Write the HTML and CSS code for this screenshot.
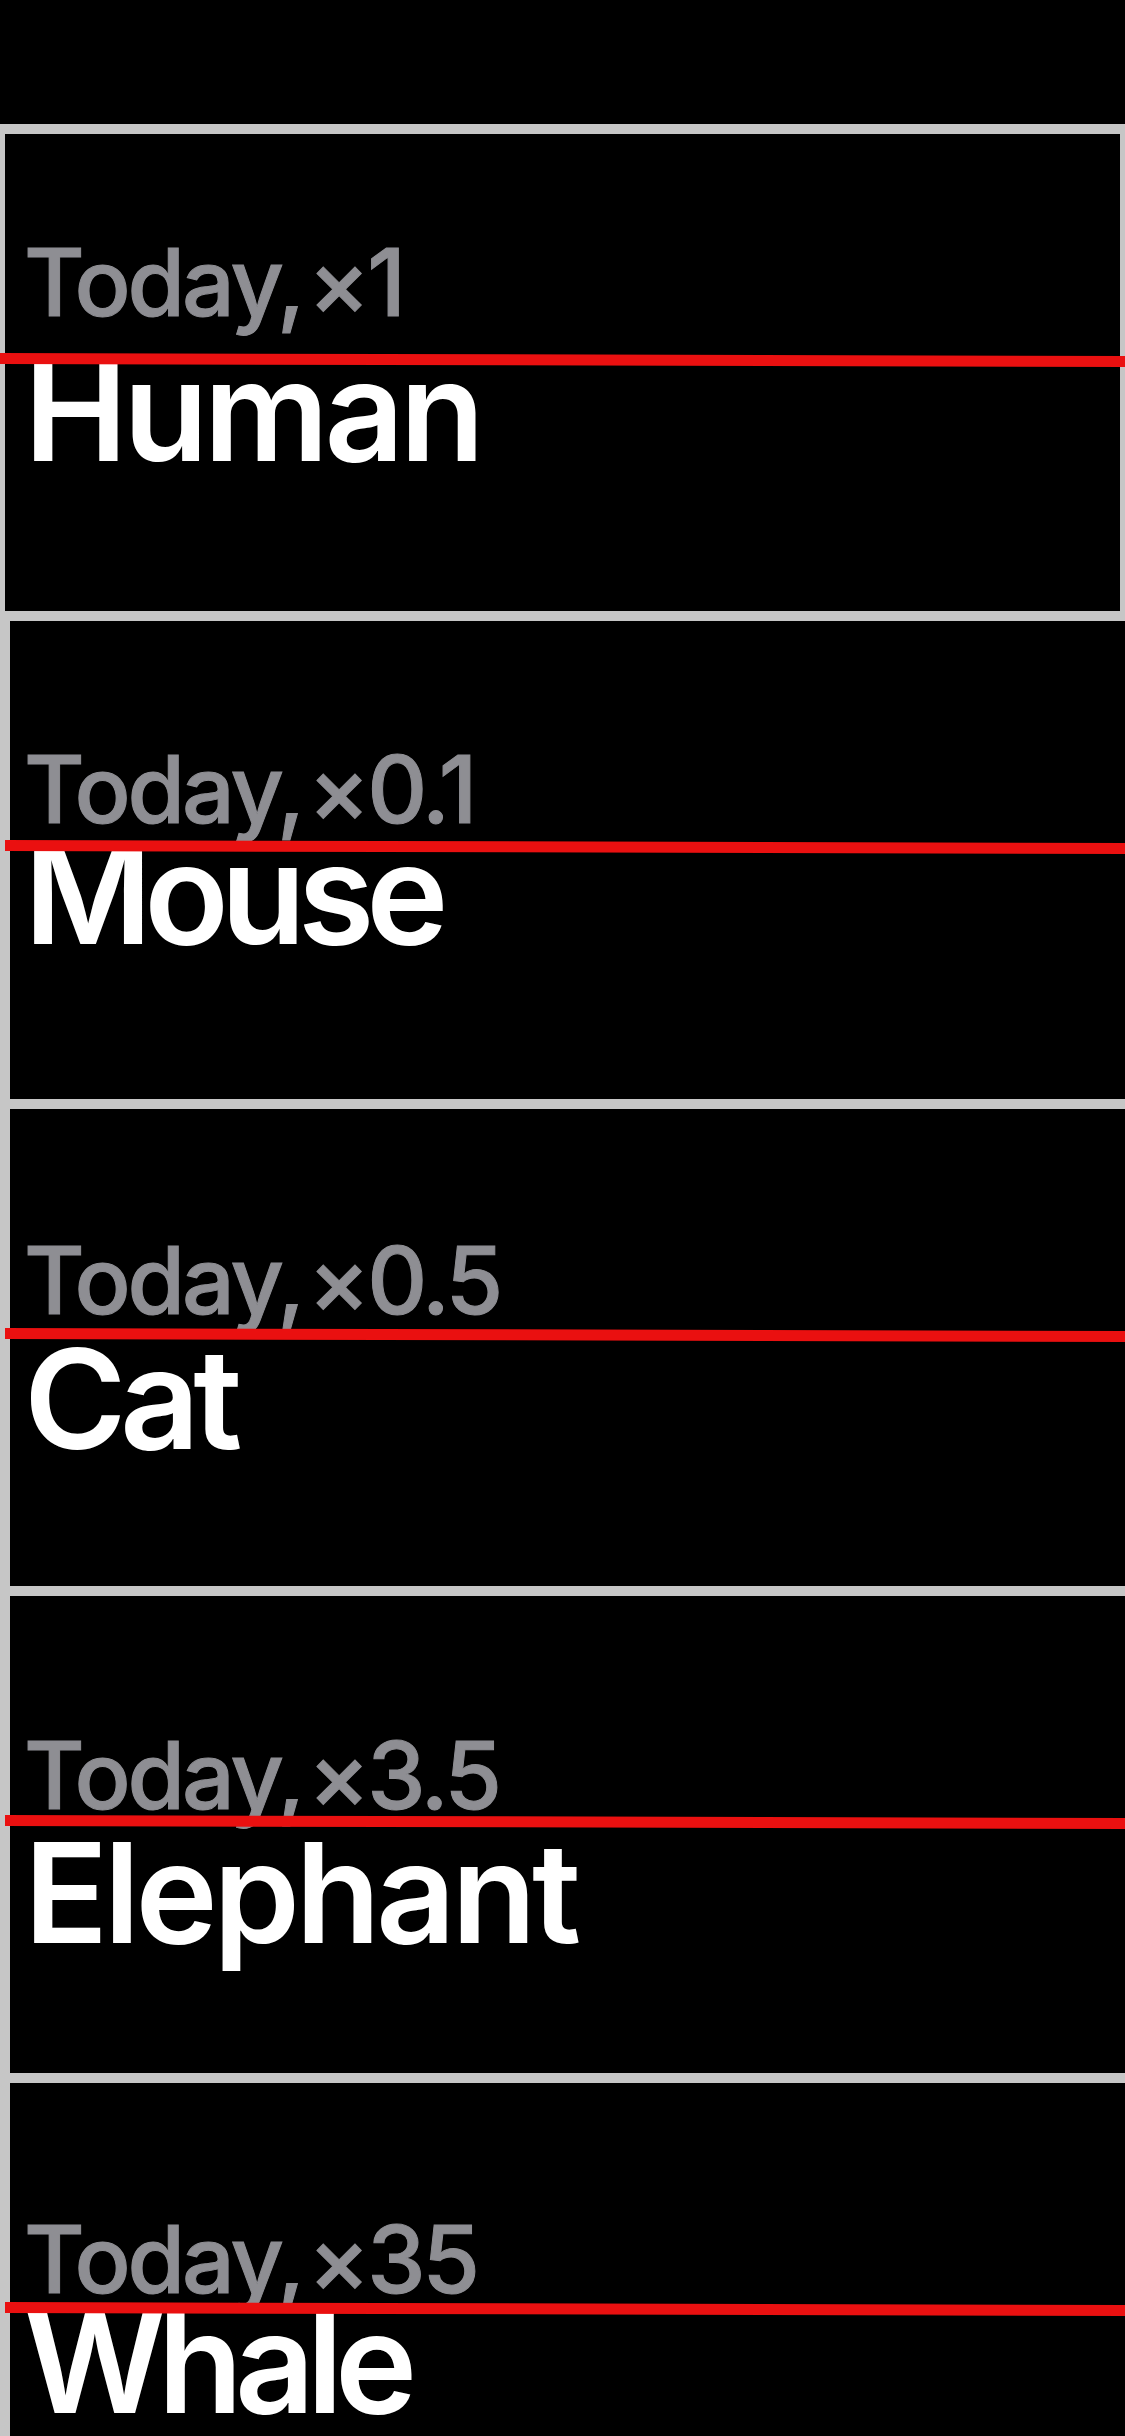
FILE: index.html
```html
<!DOCTYPE html>
<html lang="en">
<head>
<meta charset="utf-8">
<title>Animals</title>
<link rel="stylesheet" href="styles.css">
</head>
<body>
<div class="screen">
  <div class="top-space"></div>
  <ul class="list">
    <li class="cell cell--first cell--human">
      <div class="content">
        <div class="sub">Today, ×1</div>
        <div class="title">Human</div>
      </div>
      <div class="guide"></div>
    </li>
    <li class="cell cell--mouse">
      <div class="content">
        <div class="sub">Today, ×0.1</div>
        <div class="title">Mouse</div>
      </div>
      <div class="guide"></div>
    </li>
    <li class="cell cell--cat">
      <div class="content">
        <div class="sub">Today, ×0.5</div>
        <div class="title">Cat</div>
      </div>
      <div class="guide"></div>
    </li>
    <li class="cell cell--elephant">
      <div class="content">
        <div class="sub">Today, ×3.5</div>
        <div class="title">Elephant</div>
      </div>
      <div class="guide"></div>
    </li>
    <li class="cell cell--whale">
      <div class="content">
        <div class="sub">Today, ×35</div>
        <div class="title">Whale</div>
      </div>
      <div class="guide"></div>
    </li>
  </ul>
</div>
</body>
</html>
```
FILE: styles.css
```css
html, body {
  margin: 0;
  padding: 0;
  background: #000;
}
body {
  width: 1125px;
  height: 2436px;
  overflow: hidden;
  font-family: "Inter", "Liberation Sans", sans-serif;
}
.screen {
  width: 1125px;
  height: 2436px;
  overflow: hidden;
  background: #000;
}
.top-space {
  height: 124px;
}
.list {
  list-style: none;
  margin: 0;
  padding: 0;
}
.cell {
  position: relative;
  box-sizing: content-box;
  width: 1125px;
  height: 477.25px;
  border: 10px solid #c6c6c6;
  margin-bottom: -10px;
  background: #000;
}
.cell--first {
  width: 1115px;
  margin-left: -5px;
}
.content {
  padding-left: 14px;
}
.cell--first .content {
  padding-left: 19px;
}
.sub {
  font-size: 93px;
  line-height: 93px;
  font-weight: 500;
  color: #8e8e93;
  letter-spacing: -3px;
  word-spacing: -15px;
  white-space: nowrap;
  -webkit-text-stroke: 1px #8e8e93;
}
.title {
  font-size: 139px;
  line-height: 139px;
  font-weight: 600;
  color: #fff;
  letter-spacing: -4.5px;
  white-space: nowrap;
}
.guide {
  position: absolute;
  left: -5px;
  top: 219px;
  width: 1200px;
  height: 11px;
  background: #ea1010;
  transform-origin: 0 50%;
  transform: rotate(0.153deg);
}
.cell--human .content { padding-top: 102px; }
.cell--human .title { margin-top: 12px; }
.cell--mouse .content { padding-top: 122px; }
.cell--mouse .title { margin-top: -12px; letter-spacing: -8px; }
.cell--cat .content { padding-top: 125px; }
.cell--cat .title { margin-top: 2px; letter-spacing: -6.5px; }
.cell--elephant .content { padding-top: 133px; }
.cell--elephant .title { margin-top: 1px; }
.cell--whale .content { padding-top: 130px; }
.cell--whale .title { margin-top: -13px; letter-spacing: -8px; }
```
